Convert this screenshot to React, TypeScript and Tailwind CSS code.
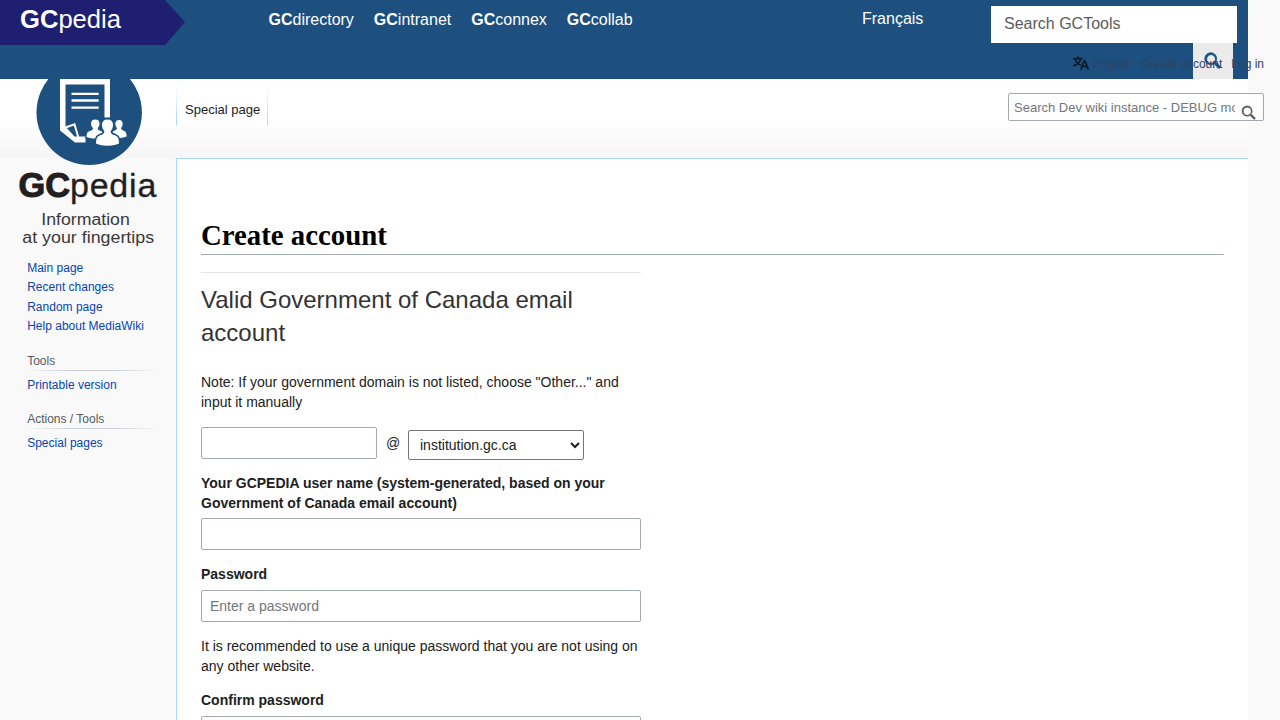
import React from "react";

const toolLinks = ["directory", "intranet", "connex", "collab"];
const navLinks = ["Main page", "Recent changes", "Random page", "Help about MediaWiki"];

function Person() {
  return (
    <path d="M0 0c4.400 0 6.400 2.600 6.400 6.200 0 2.600-1 4.600-2.400 6 0 2 1.200 2.300 3.600 2.900 3.200.9 4.100 2 4.500 5.200l.4 3.800c-3 1.700-7.200 2.400-12.500 2.400s-9.500-.7-12.500-2.400l.4-3.800c.4-3.200 1.300-4.300 4.500-5.200 2.400-.6 3.600-.9 3.600-2.900-1.400-1.400-2.400-3.400-2.400-6C-6.400 2.600-4.400 0 0 0Z" />
  );
}

function Logo() {
  return (
    <svg width="176" height="176" viewBox="0 79 176 176" className="block shrink-0" aria-label="GCpedia">
      <circle cx="89.200" cy="112.400" r="52.700" fill="#1d507e" />
      <path d="M60 79H110V117.500H104.500V84.500H65.500V126.500L74.500 136.500H85.500V142.500H75L60 130.500Z" fill="#fff" />
      <path d="M65.500 127.500L74.500 124.300L78.500 138" fill="none" stroke="#fff" strokeWidth="2" />
      <path d="M71.500 93.900H98.700M71.500 100.500H98.700M71.500 107.600H98.700" stroke="#fff" strokeWidth="2.300" />
      <g fill="#fff" stroke="#1d507e" strokeWidth="1.600">
        <g transform="translate(95.300 119) scale(.76 .76)"><Person /></g>
        <g transform="translate(119 119.400) scale(.66 .72)"><Person /></g>
        <g transform="translate(107.500 118.700) scale(.99 1.050)"><Person /></g>
      </g>
      <text x="18.600" y="197" fontSize="34.500" fontWeight="700" fill="#231f20" fontFamily="Liberation Sans, sans-serif" textLength="51.500" lengthAdjust="spacingAndGlyphs" stroke="#231f20" strokeWidth="1.100">GC</text>
      <text x="69.900" y="197" fontSize="34" fill="#231f20" fontFamily="Liberation Sans, sans-serif" textLength="86.500" lengthAdjust="spacing" stroke="#231f20" strokeWidth=".3">pedia</text>
      <text x="41.300" y="225" fontSize="17.300" fill="#3a3839" fontFamily="Liberation Sans, sans-serif" textLength="88.500" lengthAdjust="spacingAndGlyphs">Information</text>
      <text x="22.300" y="243" fontSize="17.300" fill="#3a3839" fontFamily="Liberation Sans, sans-serif" textLength="131.800" lengthAdjust="spacingAndGlyphs">at your fingertips</text>
    </svg>
  );
}

function SearchIcon({ size, color, weight = 0 }: { size: number; color: string; weight?: number }) {
  return (
    <svg width={size} height={size} viewBox="0 0 13 13" fill={color} stroke={color} strokeWidth={weight} className="block shrink-0 overflow-visible">
      <path d="M11.370 12.740 7.370 8.740a4.900 4.900 0 1 1 1.370-1.370l4 4ZM4.900 8.400a3.500 3.500 0 1 0 0-7 3.500 3.500 0 0 0 0 7Z" />
    </svg>
  );
}

function PersonalTools() {
  return (
    <div className="absolute top-[55px] right-4 flex h-[18px] items-center text-[12px] leading-[18px] text-[#2f4263]">
      <svg width="16" height="16" viewBox="0 0 20 20" fill="#0a1420" stroke="#0a1420" strokeWidth=".4" className="relative -top-px mr-[4px]">
        <path d="M20 18h-1.440a.6.6 0 0 1-.4-.12.800.800 0 0 1-.23-.31L17 15h-5l-1 2.540a.8.8 0 0 1-.22.300.6.600 0 0 1-.4.140H9l4.550-11.470h1.890zm-3.530-4.310L14.890 9.500a12 12 0 0 1-.39-1.240q-.09.370-.19.690l-.19.560-1.580 4.190zm-6.300-1.580a13.400 13.400 0 0 1-2.910-1.410 11.460 11.460 0 0 0 2.810-5.370H12V4H7.310a4 4 0 0 0-.2-.56C6.870 2.790 6.600 2 6.600 2l-1.470.5s.4.890.6 1.500H0v1.330h2.150A11.230 11.230 0 0 0 5 10.700a17.200 17.200 0 0 1-5 2.100q.56.820.87 1.380a23.300 23.300 0 0 0 5.220-2.510 15.600 15.600 0 0 0 3.560 1.770zM3.630 5.330h4.910a8.110 8.110 0 0 1-2.450 4.450 9.110 9.110 0 0 1-2.460-4.450" />
      </svg>
      <span>English</span>
      <span className="ml-[9px]">Create account</span>
      <span className="ml-[9px]">Log in</span>
    </div>
  );
}

function SidebarSection({ title, link }: { title: string; link: string }) {
  return (
    <section className="mb-[14px] pl-[27.200px]">
      <h3 className="h-[20px] w-[130px] bg-[linear-gradient(to_right,transparent,#c8ccd1_33%,#c8ccd1_66%,transparent)] bg-[length:100%_1px] bg-bottom bg-no-repeat text-[12px] leading-[20px] text-[#54595d]">{title}</h3>
      <a className="mt-[4px] block h-[20px] text-[12px] leading-[20px] text-[#0645ad]">{link}</a>
    </section>
  );
}

export default function App() {
  return (
    <div className="relative flex h-[720px] w-[1280px] overflow-hidden bg-[#f9f9f9] font-['Liberation_Sans',sans-serif] text-[#202122]">
      <div className="flex w-[1248px] flex-col">
        <header className="flex h-[79px] shrink-0 items-start bg-[#1d507e] text-white">
          <div className="h-[45px] w-[185px] bg-[#1f1f71] pt-[4px] pl-5 text-[25.600px] leading-[30px] [clip-path:polygon(0_0,165px_0,185px_22px,165px_45px,0_45px)]">
            <b>GC</b>pedia
          </div>
          <nav className="ml-[83.500px] flex w-[593.500px] gap-5 pt-[8px] text-[16px] leading-[24px]">
            {toolLinks.map((l) => (
              <a key={l}><b>GC</b>{l}</a>
            ))}
          </nav>
          <a className="w-[129px] pt-[7px] text-[16px] leading-[24px]">Français</a>
          <div className="flex w-[246px] flex-col pt-[6px]">
            <div className="h-[37px] bg-white pl-[13px] text-[16px] leading-[35px] text-[#5c5c5c]">Search GCTools</div>
            <div className="mr-[4px] flex h-[36px] w-[40px] items-center justify-center self-end bg-[#ebebeb]">
              <SearchIcon size={16} color="#1d507e" weight={0.5} />
            </div>
          </div>
        </header>

        <div className="flex min-h-0 flex-1 bg-[linear-gradient(#fff_50%,#f6f6f6)] bg-[length:100%_79px] bg-no-repeat">
          <aside className="flex w-[176px] shrink-0 flex-col">
            <Logo />
            <nav className="flex h-[96px] shrink-0 flex-col pt-[3.500px] pl-[27.200px] text-[12px] leading-[19.500px] text-[#0645ad]">
              {navLinks.map((l) => (
                <a key={l}>{l}</a>
              ))}
            </nav>
            <SidebarSection title="Tools" link="Printable version" />
            <SidebarSection title="Actions / Tools" link="Special pages" />
          </aside>

          <div className="flex min-w-0 flex-1 flex-col">
            <div className="flex h-[79px] shrink-0 items-start">
              <div className="mt-[6px] flex h-[40px] w-[92px] bg-[linear-gradient(#fff,#a7d7f9),linear-gradient(#fff,#a7d7f9)] bg-[length:1px_100%] bg-[position:left,right] bg-no-repeat pt-[15px] pl-[9px] text-[13px] leading-[20px]">Special page</div>
            </div>
            <main className="flex-1 border-t border-l border-[#a7d7f9] bg-white px-6 pt-[59px]">
              <h1 className="h-[37px] border-b border-[#a2a9b1] font-['Liberation_Serif',serif] text-[28.800px] leading-[35px] font-bold text-black">Create account</h1>
              <form className="mt-[17px] w-[440px] border-t border-[#e5e5e5] text-[14px] leading-[20px]">
                <h2 className="pt-[10px] text-[24px] leading-[33px] text-[#333]">Valid Government of Canada email account</h2>
                <p className="mt-[23px]">Note: If your government domain is not listed, choose "Other..." and input it manually</p>
                <div className="mt-[15px] flex h-[33px] items-start">
                  <input className="h-[32px] w-[176px] rounded-[2px] border border-[#a2a9b1] bg-white" />
                  <span className="ml-[9px] w-[22px] pt-[6px]">@</span>
                  <select className="mt-[3px] h-[30px] w-[176px] rounded-[2px] border border-[#767676] bg-white pl-[7px] text-[14px]">
                    <option>institution.gc.ca</option>
                  </select>
                </div>
                <label className="mt-[13px] block font-bold">Your GCPEDIA user name (system-generated, based on your Government of Canada email account)</label>
                <input className="mt-[5px] block h-[32px] w-full rounded-[2px] border border-[#a2a9b1] bg-white" />
                <label className="mt-[14px] block font-bold">Password</label>
                <input placeholder="Enter a password" className="mt-[6px] block h-[32px] w-full rounded-[2px] border border-[#a2a9b1] bg-white px-2 placeholder:text-[#72777d]" />
                <p className="mt-[14px]">It is recommended to use a unique password that you are not using on any other website.</p>
                <label className="mt-[14px] block font-bold">Confirm password</label>
                <input className="mt-[6px] block h-[32px] w-full rounded-[2px] border border-[#a2a9b1] bg-white" />
              </form>
            </main>
          </div>
        </div>
      </div>

      <PersonalTools />
      <div className="absolute top-[93px] right-4 flex h-[28px] w-[256px] rounded-[2px] border border-[#a2a9b1] bg-white/50 pl-[5px] text-[13px]">
        <input placeholder="Search Dev wiki instance - DEBUG mode" className="h-[26px] w-[221px] placeholder:text-[#72777d]" />
        <div className="ml-[7px] pt-[12px]"><SearchIcon size={14} color="#54595d" weight={0.2} /></div>
      </div>
    </div>
  );
}
